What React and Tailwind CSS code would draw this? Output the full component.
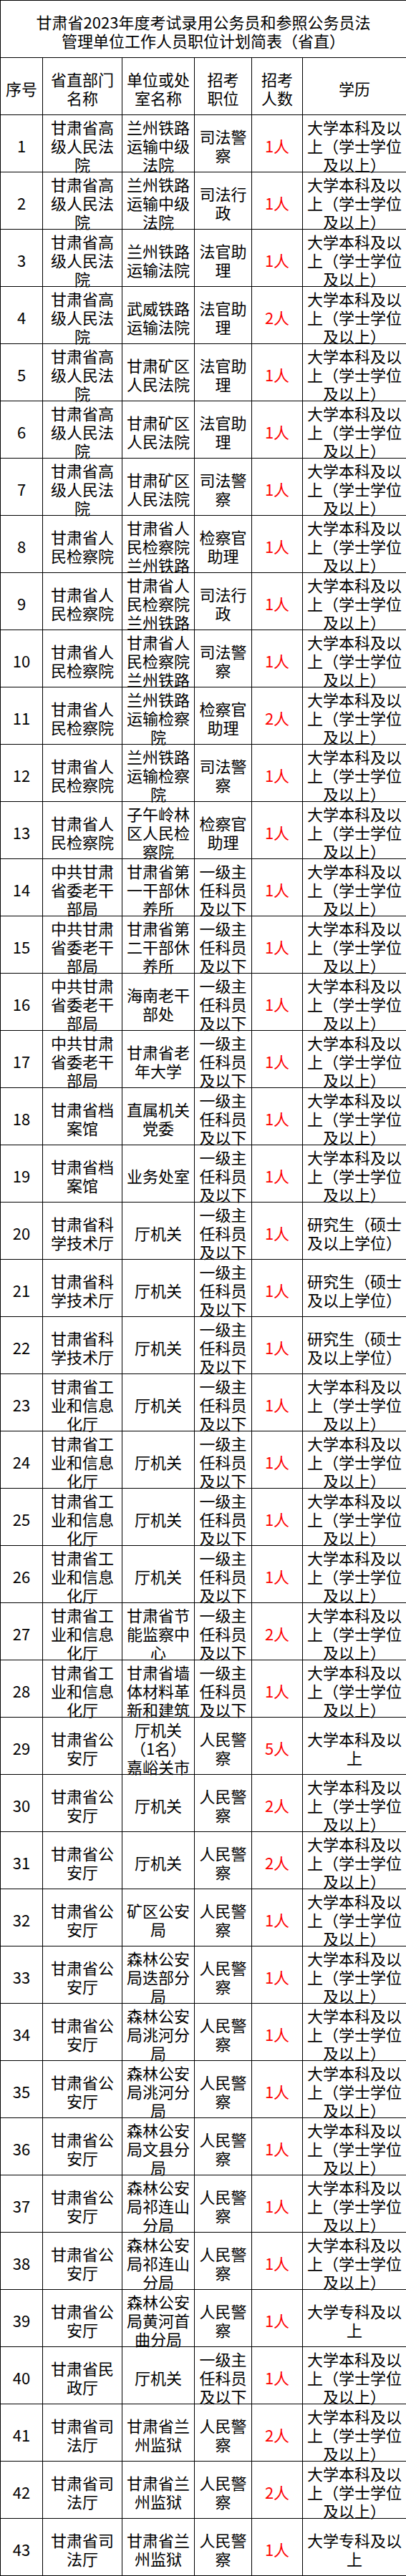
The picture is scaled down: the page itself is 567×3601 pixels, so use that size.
import React from "react";

const BK = "大学本科及以上（学士学位及以上）";
const YJS = "研究生（硕士及以上学位）";
const BK2 = "大学本科及以上";
const ZK = "大学专科及以上";

const FY = "甘肃省高级人民法院";
const JCY = "甘肃省人民检察院";
const LGB = "中共甘肃省委老干部局";
const GXT = "甘肃省工业和信息化厅";
const GAT = "甘肃省公安厅";
const YJ = "一级主任科员及以下";
const JC = "人民警察";

// [部门, 单位, 职位, 人数, 学历]
const rows = [
  [FY, "兰州铁路运输中级法院", "司法警察", "1人", BK],
  [FY, "兰州铁路运输中级法院", "司法行政", "1人", BK],
  [FY, "兰州铁路运输法院", "法官助理", "1人", BK],
  [FY, "武威铁路运输法院", "法官助理", "2人", BK],
  [FY, "甘肃矿区人民法院", "法官助理", "1人", BK],
  [FY, "甘肃矿区人民法院", "法官助理", "1人", BK],
  [FY, "甘肃矿区人民法院", "司法警察", "1人", BK],
  [JCY, "甘肃省人民检察院兰州铁路", "检察官助理", "1人", BK],
  [JCY, "甘肃省人民检察院兰州铁路", "司法行政", "1人", BK],
  [JCY, "甘肃省人民检察院兰州铁路", "司法警察", "1人", BK],
  [JCY, "兰州铁路运输检察院", "检察官助理", "2人", BK],
  [JCY, "兰州铁路运输检察院", "司法警察", "1人", BK],
  [JCY, "子午岭林区人民检察院", "检察官助理", "1人", BK],
  [LGB, "甘肃省第一干部休养所", YJ, "1人", BK],
  [LGB, "甘肃省第二干部休养所", YJ, "1人", BK],
  [LGB, "海南老干部处", YJ, "1人", BK],
  [LGB, "甘肃省老年大学", YJ, "1人", BK],
  ["甘肃省档案馆", "直属机关党委", YJ, "1人", BK],
  ["甘肃省档案馆", "业务处室", YJ, "1人", BK],
  ["甘肃省科学技术厅", "厅机关", YJ, "1人", YJS],
  ["甘肃省科学技术厅", "厅机关", YJ, "1人", YJS],
  ["甘肃省科学技术厅", "厅机关", YJ, "1人", YJS],
  [GXT, "厅机关", YJ, "1人", BK],
  [GXT, "厅机关", YJ, "1人", BK],
  [GXT, "厅机关", YJ, "1人", BK],
  [GXT, "厅机关", YJ, "1人", BK],
  [GXT, "甘肃省节能监察中心", YJ, "2人", BK],
  [GXT, "甘肃省墙体材料革新和建筑", YJ, "1人", BK],
  [GAT, ["厅机关", "（1名）", "嘉峪关市"], JC, "5人", BK2],
  [GAT, "厅机关", JC, "2人", BK],
  [GAT, "厅机关", JC, "2人", BK],
  [GAT, "矿区公安局", JC, "1人", BK],
  [GAT, "森林公安局迭部分局", JC, "1人", BK],
  [GAT, "森林公安局洮河分局", JC, "1人", BK],
  [GAT, "森林公安局洮河分局", JC, "1人", BK],
  [GAT, "森林公安局文县分局", JC, "1人", BK],
  [GAT, "森林公安局祁连山分局", JC, "1人", BK],
  [GAT, "森林公安局祁连山分局", JC, "1人", BK],
  [GAT, "森林公安局黄河首曲分局", JC, "1人", ZK],
  ["甘肃省民政厅", "厅机关", YJ, "1人", BK],
  ["甘肃省司法厅", "甘肃省兰州监狱", JC, "2人", BK],
  ["甘肃省司法厅", "甘肃省兰州监狱", JC, "2人", BK],
  ["甘肃省司法厅", "甘肃省兰州监狱", JC, "1人", ZK],
];

// split text into lines of n chars; the sheet only shows the first 3 lines
const chunk = (s, n) => {
  if (Array.isArray(s)) return s;
  const out = [];
  for (let i = 0; i < s.length; i += n) out.push(s.slice(i, i + n));
  return out.slice(0, 3);
};

const Cell = ({ lines, className = "" }) => (
  <td className="border border-black p-0 align-middle">
    <div className={`h-[79px] flex flex-col items-center justify-center leading-[26px] ${className}`}>
      <div className="flex flex-col items-center translate-y-[2px]">
        {lines.map((l, i) => (
          <span key={i} className="whitespace-nowrap">
            {l}
          </span>
        ))}
      </div>
    </div>
  </td>
);

export default function App() {
  return (
    <div
      className="w-[567px] bg-white text-black text-[22px]"
      style={{ fontFamily: '"Noto Sans CJK SC", "Liberation Serif", serif' }}
    >
      <table className="table-fixed border-collapse w-[567px]">
        <colgroup>
          <col className="w-[59px]" />
          <col className="w-[111px]" />
          <col className="w-[101px]" />
          <col className="w-[80px]" />
          <col className="w-[71px]" />
          <col className="w-[145px]" />
        </colgroup>
        <tbody>
          <tr>
            <td colSpan={6} className="border border-black p-0">
              <div className="h-[79px] flex flex-col items-center justify-center leading-[26px]">
                <div className="flex flex-col items-center translate-y-[2px]">
                  <span className="whitespace-nowrap">甘肃省2023年度考试录用公务员和参照公务员法</span>
                  <span className="whitespace-nowrap">管理单位工作人员职位计划简表（省直）</span>
                </div>
              </div>
            </td>
          </tr>
          <tr>
            <Cell lines={["序号"]} />
            <Cell lines={["省直部门", "名称"]} />
            <Cell lines={["单位或处", "室名称"]} />
            <Cell lines={["招考", "职位"]} />
            <Cell lines={["招考", "人数"]} />
            <Cell lines={["学历"]} />
          </tr>
          {rows.map((r, i) => (
            <tr key={i}>
              <Cell lines={[String(i + 1)]} />
              <Cell lines={chunk(r[0], 4)} />
              <Cell lines={chunk(r[1], 4)} />
              <Cell lines={chunk(r[2], 3)} />
              <Cell lines={[r[3]]} className="text-[#ff0000]" />
              <Cell lines={chunk(r[4], 6)} />
            </tr>
          ))}
        </tbody>
      </table>
    </div>
  );
}
